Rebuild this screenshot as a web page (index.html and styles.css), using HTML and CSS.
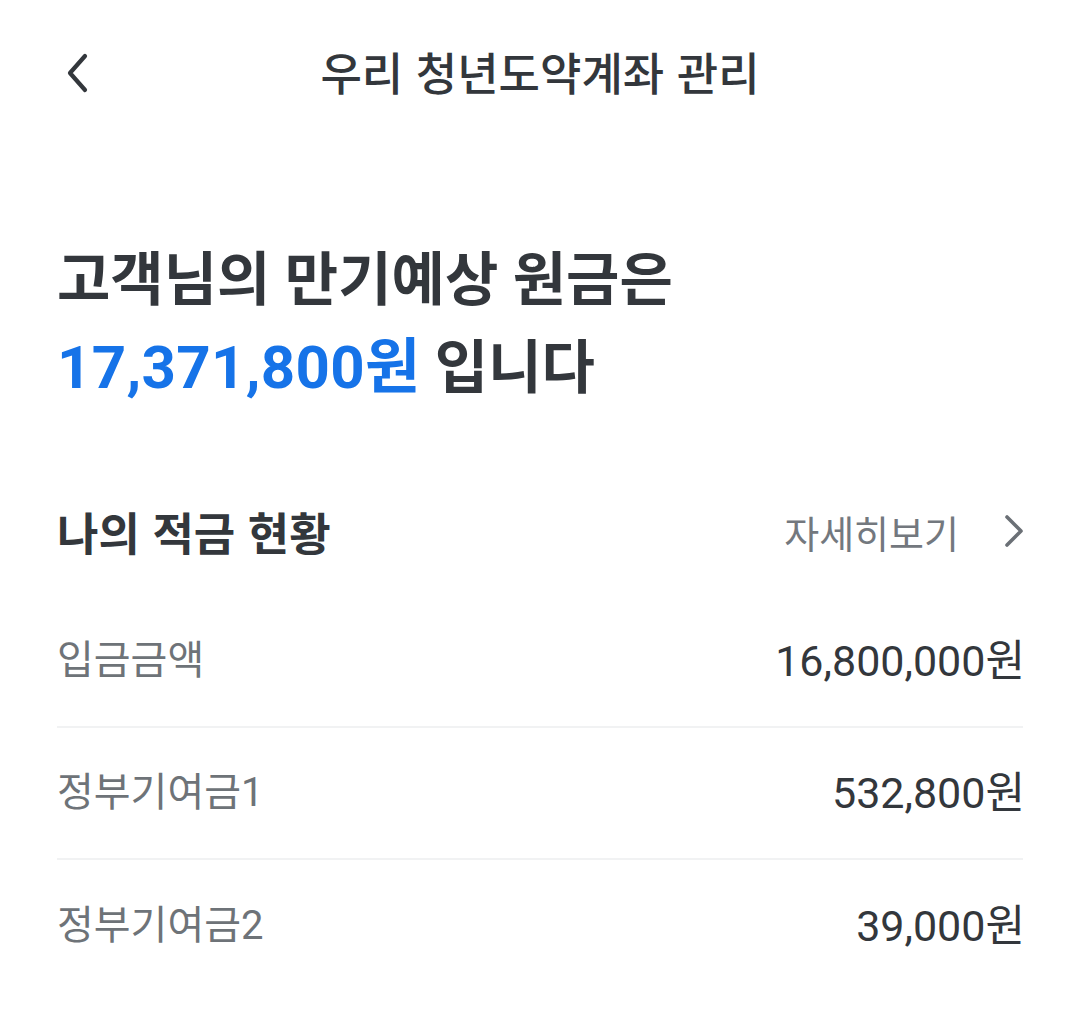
FILE: index.html
```html
<!DOCTYPE html>
<html lang="ko">
<head>
<meta charset="utf-8">
<title>우리 청년도약계좌 관리</title>
<link rel="stylesheet" href="styles.css">
</head>
<body>
<header class="topbar">
  <button class="back" aria-label="뒤로">
    <svg width="24" height="40" viewBox="0 0 24 40"><path d="M20 3 L5 20 L20 37" fill="none" stroke="#33373c" stroke-width="4.2" stroke-linecap="round" stroke-linejoin="round"/></svg>
  </button>
  <h1 class="title">우리 청년도약계좌 관리</h1>
  <span class="spacer"></span>
</header>
<main class="content">
  <h2 class="headline">고객님의 만기예상 원금은<br><span class="amount">17,371,800원</span> 입니다</h2>

  <section class="status">
    <div class="status-head">
      <h3 class="status-title">나의 적금 현황</h3>
      <a class="more" href="#">자세히보기
        <svg width="22" height="34" viewBox="0 0 22 34"><path d="M4 3 L18 17 L4 31" fill="none" stroke="#6b7076" stroke-width="3.6" stroke-linecap="round" stroke-linejoin="round"/></svg>
      </a>
    </div>
    <ul class="rows">
      <li class="row"><span class="label">입금금액</span><span class="value">16,800,000원</span></li>
      <li class="row"><span class="label">정부기여금1</span><span class="value">532,800원</span></li>
      <li class="row"><span class="label">정부기여금2</span><span class="value">39,000원</span></li>
    </ul>
  </section>
</main>
</body>
</html>
```

FILE: styles.css
```css
* { box-sizing: border-box; }
html, body { margin: 0; padding: 0; background: #ffffff; }
body {
  font-family: Roboto, "Noto Sans CJK KR", "Noto Sans", sans-serif;
  color: #33373c;
  width: 1080px;
}
.topbar {
  height: 142px;
  display: grid;
  grid-template-columns: 1fr auto 1fr;
  align-items: center;
  padding: 0 57px;
}
.back {
  justify-self: start;
  background: none;
  border: 0;
  padding: 0;
  margin-left: 8px;
  margin-top: 4px;
  display: flex;
  align-items: center;
  cursor: pointer;
}
.title {
  margin: 0;
  font-family: "Noto Sans CJK KR", sans-serif;
  font-size: 45px;
  font-weight: 500;
  letter-spacing: 0;
  line-height: 1;
  color: #33373c;
}
.content { padding: 0 57px; }
.headline {
  margin: 95px 0 0;
  font-family: Roboto, "Noto Sans CJK KR", sans-serif;
  font-size: 58px;
  font-weight: 700;
  line-height: 87px;
  letter-spacing: 0;
  color: #33373c;
}
.amount {
  color: #1673e8;
  font-size: 60px;
  letter-spacing: 0.3px;
}
.status { margin-top: 89px; }
.status-head {
  height: 60px;
  display: flex;
  align-items: center;
  justify-content: space-between;
}
.status-title {
  margin: 0;
  font-family: "Noto Sans CJK KR", sans-serif;
  font-size: 45px;
  font-weight: 700;
  letter-spacing: 0;
  color: #33373c;
}
.more {
  display: flex;
  align-items: center;
  gap: 44px;
  text-decoration: none;
  font-family: "Noto Sans CJK KR", sans-serif;
  font-size: 38px;
  font-weight: 400;
  color: #73787e;
  margin-right: -2px;
}
.rows {
  list-style: none;
  margin: 35px 0 0;
  padding: 0;
}
.row {
  height: 132px;
  display: flex;
  align-items: center;
  justify-content: space-between;
  border-bottom: 2px solid #f1f2f3;
}
.row:last-child { border-bottom: 0; }
.label {
  font-family: Roboto, "Noto Sans CJK KR", sans-serif;
  font-size: 40px;
  color: #6e7378;
  margin-top: -8px;
}
.value {
  font-family: Roboto, "Noto Sans CJK KR", sans-serif;
  font-size: 43px;
  color: #33373c;
  margin-right: -2px;
  margin-top: -8px;
}
```
